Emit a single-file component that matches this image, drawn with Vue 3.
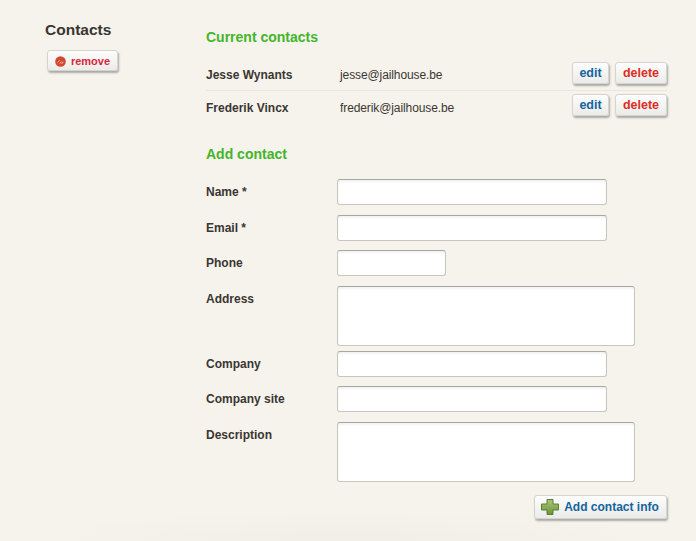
<script setup>
const contacts = [
  { name: 'Jesse Wynants', email: 'jesse@jailhouse.be' },
  { name: 'Frederik Vincx', email: 'frederik@jailhouse.be' }
]

const fields = [
  { label: 'Name *', size: 'medium' },
  { label: 'Email *', size: 'medium' },
  { label: 'Phone', size: 'small' },
  { label: 'Address', size: 'area' },
  { label: 'Company', size: 'medium' },
  { label: 'Company site', size: 'medium' },
  { label: 'Description', size: 'area' }
]
</script>

<template>
  <div class="page">
    <aside class="sidebar">
      <h1 class="page-title">Contacts</h1>
      <button class="btn btn-remove" type="button">
        <svg class="remove-icon" width="11" height="11" viewBox="0 0 11 11">
          <circle cx="5.5" cy="5.5" r="5.3" fill="#d2492f" />
          <path d="M2.6 6.4 L4.6 4.4 M6.4 8 L8.4 5.8 M4.8 7.4 L6.6 5.6" stroke="#f0bfa9" stroke-width="1" fill="none" />
        </svg>
        remove
      </button>
    </aside>

    <main class="content">
      <h2 class="section-title">Current contacts</h2>
      <ul class="contact-list">
        <li v-for="c in contacts" :key="c.email" class="contact">
          <span class="contact-name">{{ c.name }}</span>
          <span class="contact-email">{{ c.email }}</span>
          <span class="contact-actions">
            <button class="btn btn-edit" type="button">edit</button>
            <button class="btn btn-delete" type="button">delete</button>
          </span>
        </li>
      </ul>

      <h2 class="section-title add-title">Add contact</h2>
      <form class="contact-form" @submit.prevent>
        <div v-for="f in fields" :key="f.label" class="field" :class="{ 'field-area': f.size === 'area' }">
          <label class="field-label">{{ f.label }}</label>
          <textarea v-if="f.size === 'area'" class="input input-area"></textarea>
          <input v-else class="input" :class="'input-' + f.size" type="text" />
        </div>
        <div class="form-actions">
          <button class="btn btn-add" type="submit">
            <svg class="plus-icon" width="18" height="16" viewBox="0 0 18 16">
              <defs>
                <linearGradient id="plusFill" x1="0" y1="0" x2="0" y2="1">
                  <stop offset="0" stop-color="#a9c878" />
                  <stop offset="1" stop-color="#6d9438" />
                </linearGradient>
              </defs>
              <path d="M6 .5 H12 V5 H17.5 V11 H12 V15.5 H6 V11 H.5 V5 H6 Z" fill="url(#plusFill)" stroke="#5d7d33" stroke-width="1" stroke-linejoin="round" />
            </svg>
            Add contact info
          </button>
        </div>
      </form>
    </main>
  </div>
</template>

<style>
body {
  background: #f6f3ed;
}
</style>

<style scoped>
.page {
  width: 696px;
  height: 541px;
  overflow: hidden;
  display: flex;
  box-sizing: border-box;
  font-family: "Liberation Sans", Arial, sans-serif;
  color: #3a3632;
  background: radial-gradient(ellipse 320px 30px at 50% 100%, #f1eee6, #f6f3ed);
}

.sidebar {
  width: 206px;
  flex: none;
  padding: 20px 0 0 45px;
  box-sizing: border-box;
}

.page-title {
  margin: 0 0 11px;
  font-size: 15.5px;
  line-height: 19px;
  font-weight: bold;
}

.content {
  width: 461px;
  flex: none;
  padding-top: 29px;
}

.section-title {
  margin: 0;
  font-size: 14px;
  line-height: 17px;
  font-weight: bold;
  color: #44b52a;
}

.contact-list {
  list-style: none;
  margin: 14px 0 0;
  padding: 0;
}

.contact {
  display: flex;
  align-items: flex-start;
  box-sizing: border-box;
  height: 31px;
  font-size: 12px;
  line-height: 14px;
}

.contact:first-child {
  border-bottom: 1px solid #ebe7de;
}

.contact + .contact {
  height: 33px;
  padding-top: 1px;
}

.contact + .contact .contact-name,
.contact + .contact .contact-email {
  padding-top: 9px;
}

.contact-name {
  width: 134px;
  padding-top: 8px;
  font-weight: bold;
}

.contact-email {
  padding-top: 8px;
  letter-spacing: -0.1px;
}

.contact-actions {
  margin-left: auto;
  margin-top: 2px;
  display: flex;
  gap: 6px;
}

.add-title {
  margin-top: 22px;
}

.contact-form {
  margin-top: 16.25px;
}

.field {
  display: flex;
  margin-bottom: 9.5px;
}

.field-area {
  margin-bottom: 5px;
}

.field-label {
  width: 131px;
  flex: none;
  padding-top: 5.8px;
  font-size: 12px;
  line-height: 15px;
  font-weight: bold;
}

.input {
  display: block;
  box-sizing: border-box;
  height: 26px;
  margin: 0;
  padding: 3px 6px;
  background: #fff;
  border: 1px solid #c9c6be;
  border-top-color: #a8a6a1;
  border-radius: 3px;
  box-shadow: inset 0 2px 2px rgba(0, 0, 0, 0.05);
  outline: none;
  resize: none;
}

.input-medium {
  width: 270px;
}

.input-small {
  width: 109px;
}

.input-area {
  width: 298px;
  height: 60px;
}

.form-actions {
  display: flex;
  justify-content: flex-end;
  margin-top: 13px;
}

.btn {
  display: inline-flex;
  align-items: center;
  justify-content: center;
  box-sizing: border-box;
  height: 22px;
  padding: 0 6px;
  font-family: inherit;
  font-size: 12.5px;
  font-weight: bold;
  white-space: nowrap;
  background: linear-gradient(#fdfdfd, #ebebe9);
  border: 1px solid #d6d4cf;
  border-radius: 3px;
  box-shadow: 1px 2px 2px rgba(0, 0, 0, 0.3);
}

.btn-edit {
  width: 37px;
  color: #14649f;
}

.btn-delete {
  width: 52px;
  color: #de2c20;
}

.btn-remove {
  width: 71px;
  height: 21px;
  margin-left: 2px;
  gap: 5px;
  font-size: 11px;
  color: #d9263a;
}

.remove-icon {
  margin-top: 2px;
}

.btn-add {
  width: 133px;
  height: 24px;
  gap: 5px;
  font-size: 12px;
  color: #14649f;
}

.plus-icon {
  margin-left: -1px;
}
</style>
